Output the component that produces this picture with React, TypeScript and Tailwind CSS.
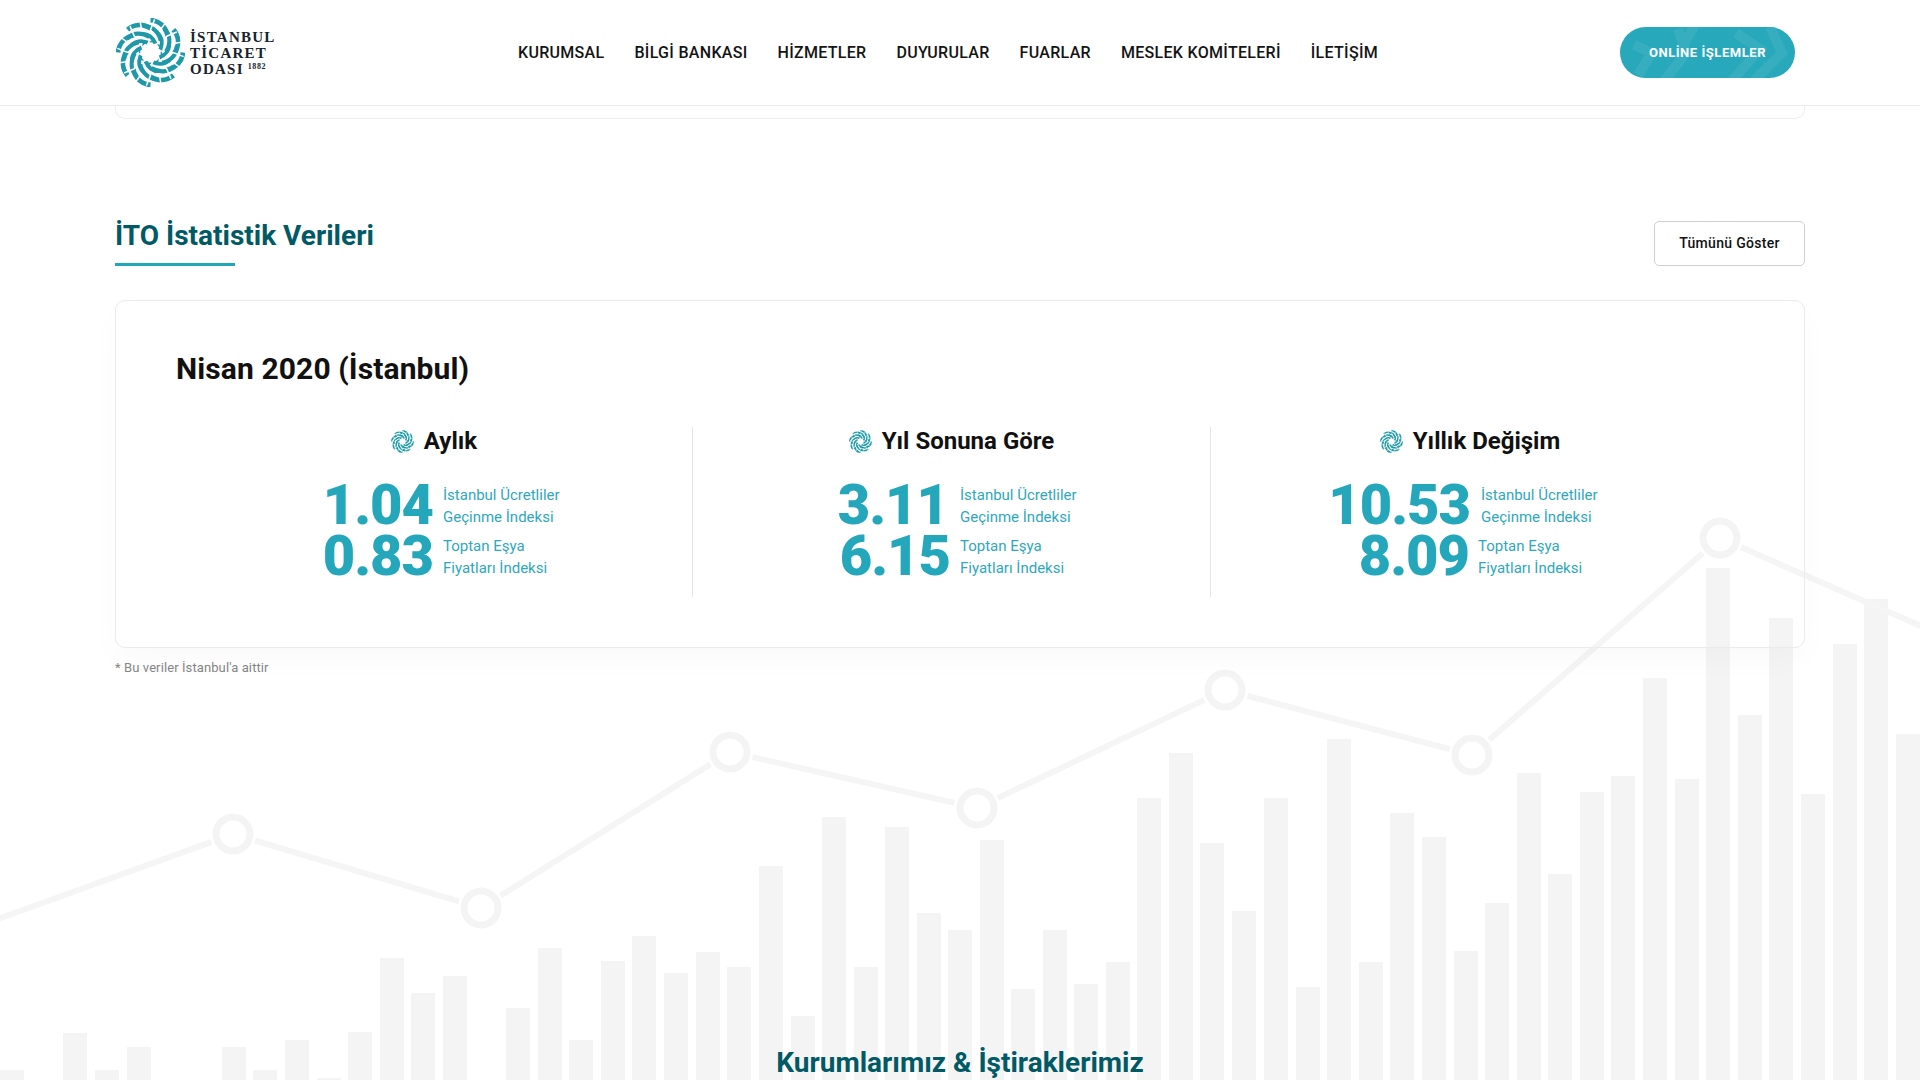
const BARS: [number, number][] = [
  [0, 1070], [63, 1033], [95, 1070], [127, 1047], [222, 1047], [253, 1070], [285, 1040], [317, 1078], [348, 1032],
  [380, 958], [411, 993], [443, 976], [506, 1008], [538, 948], [569, 1040], [601, 961], [632, 936], [664, 973],
  [696, 952], [727, 967], [759, 866], [791, 1016], [822, 817], [854, 967], [885, 827], [917, 913], [948, 930],
  [980, 840], [1011, 989], [1043, 930], [1074, 984], [1106, 962], [1137, 798], [1169, 753], [1200, 843], [1232, 911],
  [1264, 798], [1296, 987], [1327, 739], [1359, 962], [1390, 813], [1422, 837], [1454, 951], [1485, 903], [1517, 773],
  [1548, 874], [1580, 792], [1611, 776], [1643, 678], [1675, 779], [1706, 568], [1738, 715], [1769, 618], [1801, 794],
  [1833, 644], [1864, 599], [1896, 734],
];

const POINTS: [number, number][] = [
  [-10, 922], [233, 834], [481, 908], [730, 752], [977, 808], [1225, 690], [1472, 755], [1720, 538], [1930, 630],
];

function Chart() {
  const segments = POINTS.slice(0, -1).map((p, i) => {
    const q = POINTS[i + 1];
    const dx = q[0] - p[0];
    const dy = q[1] - p[1];
    const len = Math.hypot(dx, dy);
    const ux = dx / len;
    const uy = dy / len;
    const a = i === 0 ? 0 : 23;
    const b = i === POINTS.length - 2 ? 0 : 23;
    return `M${p[0] + ux * a} ${p[1] + uy * a}L${q[0] - ux * b} ${q[1] - uy * b}`;
  });
  return (
    <svg className="absolute inset-0 h-[1080px] w-[1920px]" viewBox="0 0 1920 1080" aria-hidden="true">
      {BARS.map(([x, y]) => (
        <rect key={x} x={x} y={y} width="24" height={1080 - y} fill="#f4f4f4" />
      ))}
      <path d={segments.join("")} fill="none" stroke="#f5f5f5" strokeWidth="6" />
      {POINTS.slice(1, -1).map(([x, y]) => (
        <circle key={x} cx={x} cy={y} r="17" fill="none" stroke="#f4f4f4" strokeWidth="7" />
      ))}
    </svg>
  );
}

function Rosette({ className, color = "#1f9cab" }: { className: string; color?: string }) {
  const units = Array.from({ length: 8 }, (_, i) => i * 45);
  return (
    <svg viewBox="0 0 100 100" className={className} aria-hidden="true">
      {units.map((r) => (
        <g key={`a${r}`} transform={`rotate(${r} 50 50)`} fill="none" stroke={color}>
          <path d="M50 3C62 4 72 12 75 26" strokeWidth="7" />
          <path d="M40 12C52 11 62 20 65 33" strokeWidth="6" />
          <path d="M37 23C46 22 54 28 57 37" strokeWidth="5.5" />
        </g>
      ))}
      {units.map((r) => (
        <g key={`b${r}`} transform={`rotate(${r} 50 50)`} fill="none" stroke="#ffffff" strokeWidth="2.2">
          <path d="M56 2L50 17L58 30" />
          <path d="M71 8L63 19" />
        </g>
      ))}
      {units.map((r) => (
        <path key={`c${r}`} transform={`rotate(${r} 50 50)`} d="M50 26L60 36L48 35L52 32Z" fill={color} />
      ))}
    </svg>
  );
}

function ButtonPattern() {
  return (
    <svg viewBox="0 0 175 51" className="absolute inset-0 h-full w-full" aria-hidden="true">
      <g fill="none" stroke="#36aec0" strokeWidth="10">
        <path d="M14 18L32 26L18 48" />
        <path d="M44 54L66 26L58 2" />
        <path d="M76 -4L62 20" />
        <path d="M112 54L140 22L116 6" />
        <path d="M134 54L162 26L150 0" />
      </g>
    </svg>
  );
}

const NAV = ["KURUMSAL", "BİLGİ BANKASI", "HİZMETLER", "DUYURULAR", "FUARLAR", "MESLEK KOMİTELERİ", "İLETİŞİM"];

function Header() {
  return (
    <header className="relative z-10 h-[106px] border-b border-[#ebebeb] bg-white">
      <div className="mx-auto flex h-full w-[1690px] items-center">
        <div className="flex w-[403px] items-center gap-[5px] pl-[1px]">
          <Rosette className="h-[69px] w-[69px]" color="#1f98a8" />
          <div className="font-['Liberation_Serif'] text-[15px] leading-[16px] font-bold tracking-[1.25px] text-[#18242c]">
            <div>İSTANBUL</div>
            <div>TİCARET</div>
            <div className="flex items-start">
              ODASI<span className="ml-[4px] text-[8px] leading-[12px] tracking-[0.6px]">1882</span>
            </div>
          </div>
        </div>
        <nav className="flex gap-[30px] font-['Roboto'] text-[16px] font-medium tracking-[0.3px] text-[#141414]">
          {NAV.map((n) => (
            <span key={n}>{n}</span>
          ))}
        </nav>
        <button className="relative mr-[10px] ml-auto h-[51px] w-[175px] overflow-hidden rounded-full bg-[#27a8bb] font-['Roboto'] text-[13px] font-bold tracking-[0.55px] text-white">
          <ButtonPattern />
          <span className="relative">ONLİNE İŞLEMLER</span>
        </button>
      </div>
    </header>
  );
}

type Row = { value: string; l1: string; l2: string; num: string; lab: string };

const I1 = ["İstanbul Ücretliler", "Geçinme İndeksi"];
const I2 = ["Toptan Eşya", "Fiyatları İndeksi"];

const COLS: { title: string; rows: Row[]; border: string }[] = [
  {
    title: "Aylık",
    border: "border-r border-[#e6e6e6]",
    rows: [
      { value: "1.04", l1: I1[0], l2: I1[1], num: "pr-[4px]", lab: "pl-[6px]" },
      { value: "0.83", l1: I2[0], l2: I2[1], num: "pr-[4px]", lab: "pl-[6px]" },
    ],
  },
  {
    title: "Yıl Sonuna Göre",
    border: "border-r border-[#e6e6e6]",
    rows: [
      { value: "3.11", l1: I1[0], l2: I1[1], num: "pr-[6px]", lab: "pl-[6px]" },
      { value: "6.15", l1: I2[0], l2: I2[1], num: "pr-[4px]", lab: "pl-[6px]" },
    ],
  },
  {
    title: "Yıllık Değişim",
    border: "",
    rows: [
      { value: "10.53", l1: I1[0], l2: I1[1], num: "pr-[2px]", lab: "pl-[9px]" },
      { value: "8.09", l1: I2[0], l2: I2[1], num: "pr-[3px]", lab: "pl-[6px]" },
    ],
  },
];

function StatColumn({ title, rows, border }: { title: string; rows: Row[]; border: string }) {
  return (
    <div className={`${border} pb-[15px]`}>
      <div className="flex h-[28px] items-center justify-center gap-[10px]">
        <Rosette className="h-[23px] w-[23px]" />
        <span className="font-['Roboto'] text-[24px] leading-[28px] font-bold text-[#111]">{title}</span>
      </div>
      <div className="mt-[25px]">
        {rows.map((r) => (
          <div key={r.value} className="grid h-[51px] grid-cols-[261px_1fr] items-center">
            <div className={`${r.num} text-right font-['Roboto'] text-[56px] leading-[51px] font-black tracking-[-1px] text-[#24a7bb]`}>
              {r.value}
            </div>
            <div className={`${r.lab} font-['Roboto'] text-[15px] leading-[22px] text-[#2fa8bb]`}>
              <div>{r.l1}</div>
              <div>{r.l2}</div>
            </div>
          </div>
        ))}
      </div>
    </div>
  );
}

export default function App() {
  return (
    <div className="relative h-[1080px] w-full overflow-hidden bg-white font-['Roboto']">
      <Chart />
      <Header />
      <div className="relative mx-auto w-[1690px]">
        <div className="h-[13px] rounded-b-[10px] border-x border-b border-[#eeeeee]" />
        <div className="mt-[99px] flex items-end justify-between">
          <div>
            <h2 className="text-[28px] leading-[36px] font-bold text-[#005a66]">İTO İstatistik Verileri</h2>
            <div className="mt-[9px] h-[3px] w-[120px] bg-[#1fa8b9]" />
          </div>
          <button className="h-[45px] w-[151px] rounded-[5px] border border-[#cfcfcf] bg-white text-[14px] font-medium tracking-[0.3px] text-[#111]">
            Tümünü Göster
          </button>
        </div>
        <section className="mt-[34px] rounded-[10px] border border-[#ebebeb] px-[60px] pt-[50px] pb-[50px] shadow-[0_12px_30px_rgba(0,0,0,0.025)]">
          <h3 className="text-[30px] leading-[36px] font-bold tracking-[0.1px] text-[#111]">Nisan 2020 (İstanbul)</h3>
          <div className="mt-[40px] grid grid-cols-[517px_518px_518px]">
            {COLS.map((c) => (
              <StatColumn key={c.title} title={c.title} rows={c.rows} border={c.border} />
            ))}
          </div>
        </section>
        <p className="mt-[12px] text-[13px] leading-[16px] tracking-[0.1px] text-[#858585]">* Bu veriler İstanbul&apos;a aittir</p>
        <h2 className="mt-[369px] text-center text-[28px] leading-[36px] font-bold text-[#005a66]">
          Kurumlarımız &amp; İştiraklerimiz
        </h2>
      </div>
    </div>
  );
}
